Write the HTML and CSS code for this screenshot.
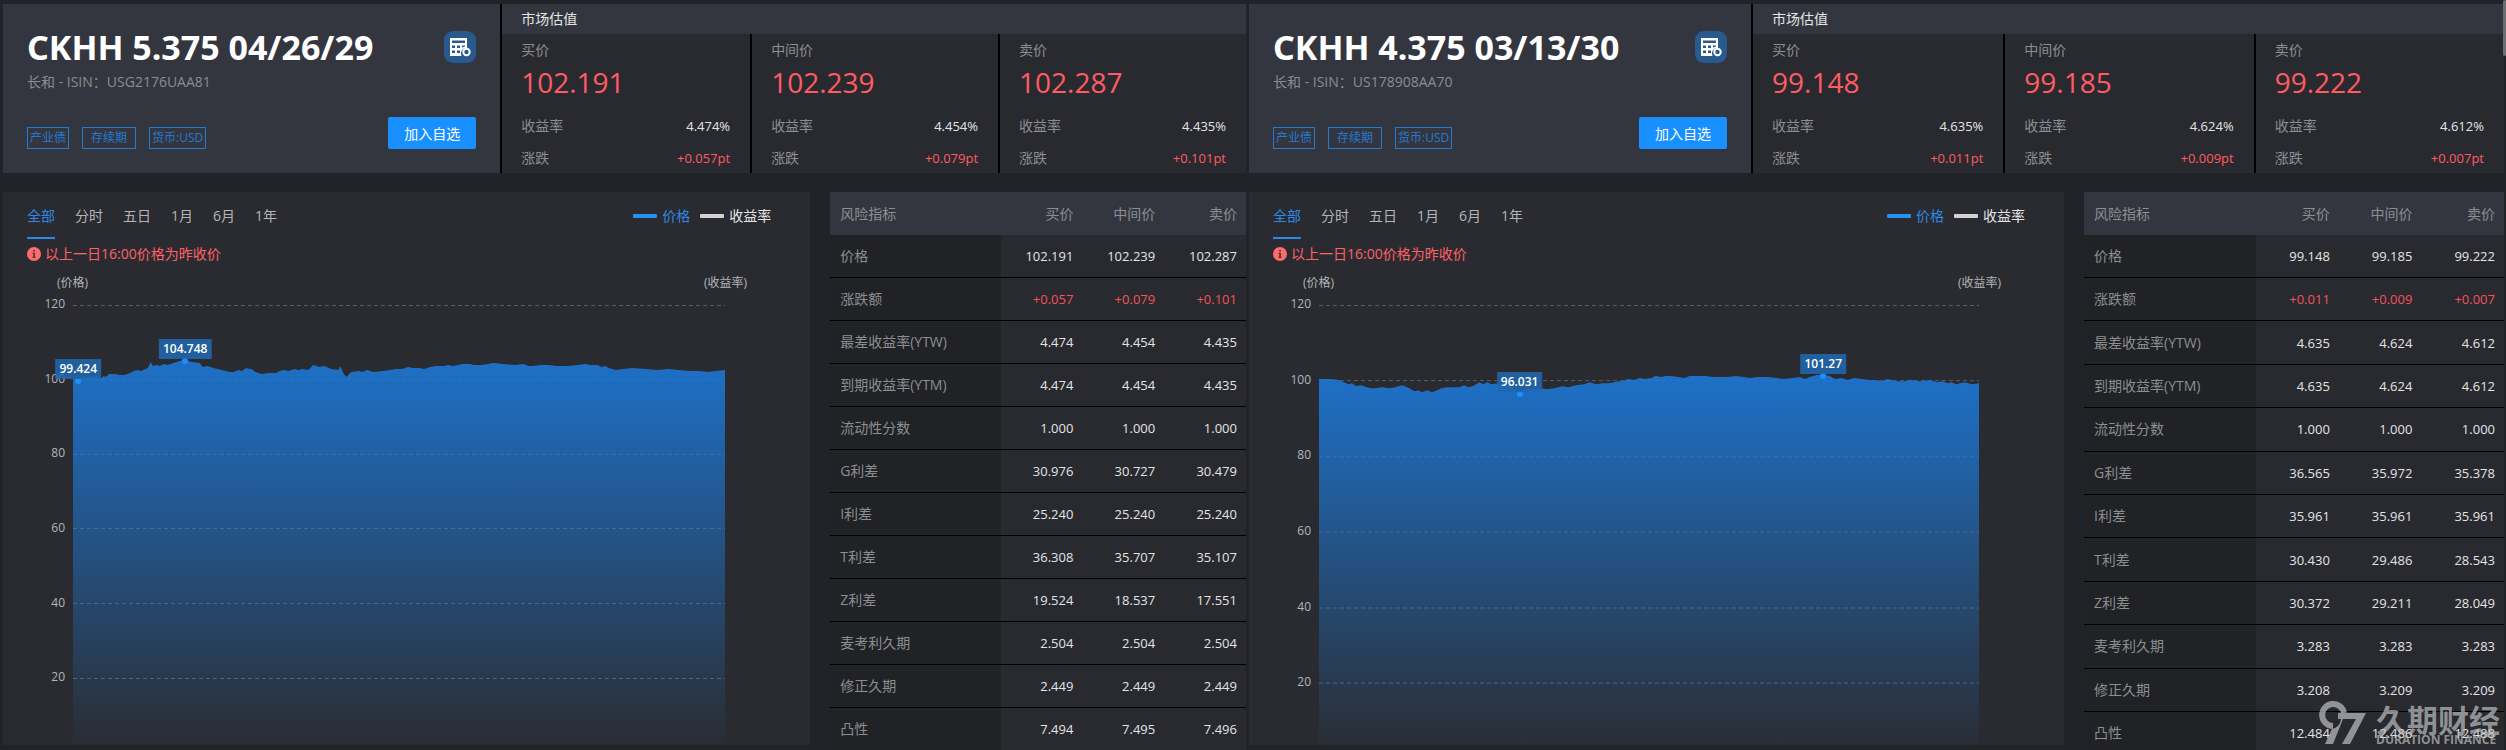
FILE: index.html
```html
<!DOCTYPE html>
<html lang="zh-CN">
<head>
    <meta charset="UTF-8">
    <meta name="viewport" content="width=device-width, initial-scale=1.0">
    <title>CKHH 债券对比</title>
    <link rel="stylesheet" href="styles.css">
</head>
<body>
    <svg class="defs" width="0" height="0" aria-hidden="true">
        <defs>
            <linearGradient id="areaFill" x1="0" y1="0" x2="0" y2="1">
                <stop offset="0" stop-color="#1c78d8" stop-opacity="0.9"/>
                <stop offset="1" stop-color="#1f7ee0" stop-opacity="0"/>
            </linearGradient>
            <symbol id="calc" viewBox="0 0 32 32">
                <path fill="#fff" fill-rule="evenodd" d="M6 7h17v10a5.500 5.500 0 0 0-5.500 8H6zM8 9.500v2.500h13V9.500zM8 14.500v2.500h3v-2.500zM13 14.500v2.500h3v-2.500zM18 14.500v2l3-1v-1zM8 19.500v2.500h3v-2.500zM13 19.500v2.500h3v-2.500z"/>
                <circle cx="22.500" cy="21" r="3.200" fill="none" stroke="#fff" stroke-width="2"/>
            </symbol>
            <symbol id="info" viewBox="0 0 14 14">
                <circle cx="7" cy="7" r="7" fill="#ff6b6b"/>
                <path fill="#2a2b30" d="M6.300 3h1.500v1.500H6.300zM5.500 5.800h2.300v4h.900v1H5.500v-1h.900v-3h-.900z"/>
            </symbol>
        </defs>
    </svg>

    <main class="page">
        <section class="bond">
            <header class="summary">
                <div class="intro">
                    <div class="intro-top">
                        <h1>CKHH 5.375 04/26/29</h1>
                        <button class="calc-btn" aria-label="计算器"><svg><use href="#calc"/></svg></button>
                    </div>
                    <p class="isin">长和 - ISIN：USG2176UAA81</p>
                    <div class="intro-bottom">
                        <div class="tags">
                            <span class="tag">产业债</span>
                            <span class="tag tag-wide">存续期</span>
                            <span class="tag">货币:USD</span>
                        </div>
                        <button class="add-btn">加入自选</button>
                    </div>
                </div>
                <div class="market">
                    <h2>市场估值</h2>
                    <div class="quotes">
                        <div class="quote">
                            <div class="label">买价</div>
                            <div class="price">102.191</div>
                            <div class="line"><span>收益率</span><b>4.474%</b></div>
                            <div class="line"><span>涨跌</span><b class="up">+0.057pt</b></div>
                        </div>
                        <div class="quote">
                            <div class="label">中间价</div>
                            <div class="price">102.239</div>
                            <div class="line"><span>收益率</span><b>4.454%</b></div>
                            <div class="line"><span>涨跌</span><b class="up">+0.079pt</b></div>
                        </div>
                        <div class="quote">
                            <div class="label">卖价</div>
                            <div class="price">102.287</div>
                            <div class="line"><span>收益率</span><b>4.435%</b></div>
                            <div class="line"><span>涨跌</span><b class="up">+0.101pt</b></div>
                        </div>
                    </div>
                </div>
            </header>

            <div class="detail">
                <div class="chart">
                    <div class="chart-bar">
                        <nav class="tabs">
                            <a href="#" class="active">全部</a>
                            <a href="#">分时</a>
                            <a href="#">五日</a>
                            <a href="#">1月</a>
                            <a href="#">6月</a>
                            <a href="#">1年</a>
                        </nav>
                        <div class="legend">
                            <span class="key key-price">价格</span>
                            <span class="key">收益率</span>
                        </div>
                    </div>
                    <p class="notice"><svg><use href="#info"/></svg>以上一日16:00价格为昨收价</p>
                    <div class="axis-names"><span>(价格)</span><span>(收益率)</span></div>
                    <div class="plot-row">
                        <ul class="y-axis"><li>120</li><li>100</li><li>80</li><li>60</li><li>40</li><li>20</li></ul>
                        <div class="plot">
                            <svg viewBox="0 0 654 448" preserveAspectRatio="none">
                                <path class="grid" d="M0 .5H654M0 74.500H654M0 149.500H654M0 223.500H654M0 298.500H654M0 373.500H654"/>
                                <path class="area" d="M0 75L5 76 9 72 13 73 17 71 20 72 24 71 27 74 31 71 33 72 36 69 42 69 47 70 52 70 57 68 61 66 65 65 68 66 71 65 75 63 78 57 80 61 84 60 87 61 91 59 95 60 101 58 107 56 112 55 119 57 127 58 130 62 135 61 141 63 149 65 153 66 157 67 161 67 166 65 169 66 174 63 177 64 179 64 183 67 189 69 196 68 204 68 207 66 211 65 216 66 222 64 226 65 230 64 236 65 238 63 241 60 247 62 252 61 259 64 266 65 268 61 271 68 274 72 279 67 287 66 290 67 295 65 301 67 311 66 318 65 324 64 330 64 336 62 341 63 347 63 352 64 358 62 364 61 372 61 376 60 381 61 391 59 398 59 402 60 410 60 416 59 421 58 431 59 444 60 452 59 457 61 461 61 469 60 477 60 485 61 497 61 506 60 514 59 518 60 526 60 530 62 534 61 537 63 541 64 544 65 552 64 561 63 574 64 587 65 597 64 607 65 619 66 627 66 637 67 645 66 654 65V448H0Z"/>
                            </svg>
                            <i class="dot" style="left: 0.8%; top: 17%"></i>
                            <i class="dot" style="left: 17.2%; top: 12.5%"></i>
                            <span class="mark" style="left: 0.8%; top: 17%">99.424</span>
                            <span class="mark" style="left: 17.2%; top: 12.5%">104.748</span>
                        </div>
                    </div>
                </div>

                <table class="risk">
                    <thead>
                        <tr><th>风险指标</th><th>买价</th><th>中间价</th><th>卖价</th></tr>
                    </thead>
                    <tbody>
                        <tr><th>价格</th><td>102.191</td><td>102.239</td><td>102.287</td></tr>
                        <tr class="up"><th>涨跌额</th><td>+0.057</td><td>+0.079</td><td>+0.101</td></tr>
                        <tr><th>最差收益率(YTW)</th><td>4.474</td><td>4.454</td><td>4.435</td></tr>
                        <tr><th>到期收益率(YTM)</th><td>4.474</td><td>4.454</td><td>4.435</td></tr>
                        <tr><th>流动性分数</th><td>1.000</td><td>1.000</td><td>1.000</td></tr>
                        <tr><th>G利差</th><td>30.976</td><td>30.727</td><td>30.479</td></tr>
                        <tr><th>I利差</th><td>25.240</td><td>25.240</td><td>25.240</td></tr>
                        <tr><th>T利差</th><td>36.308</td><td>35.707</td><td>35.107</td></tr>
                        <tr><th>Z利差</th><td>19.524</td><td>18.537</td><td>17.551</td></tr>
                        <tr><th>麦考利久期</th><td>2.504</td><td>2.504</td><td>2.504</td></tr>
                        <tr><th>修正久期</th><td>2.449</td><td>2.449</td><td>2.449</td></tr>
                        <tr><th>凸性</th><td>7.494</td><td>7.495</td><td>7.496</td></tr>
                    </tbody>
                </table>
            </div>
        </section>

        <section class="bond bond-tall">
            <header class="summary">
                <div class="intro">
                    <div class="intro-top">
                        <h1>CKHH 4.375 03/13/30</h1>
                        <button class="calc-btn" aria-label="计算器"><svg><use href="#calc"/></svg></button>
                    </div>
                    <p class="isin">长和 - ISIN：US178908AA70</p>
                    <div class="intro-bottom">
                        <div class="tags">
                            <span class="tag">产业债</span>
                            <span class="tag tag-wide">存续期</span>
                            <span class="tag">货币:USD</span>
                        </div>
                        <button class="add-btn">加入自选</button>
                    </div>
                </div>
                <div class="market">
                    <h2>市场估值</h2>
                    <div class="quotes">
                        <div class="quote">
                            <div class="label">买价</div>
                            <div class="price">99.148</div>
                            <div class="line"><span>收益率</span><b>4.635%</b></div>
                            <div class="line"><span>涨跌</span><b class="up">+0.011pt</b></div>
                        </div>
                        <div class="quote">
                            <div class="label">中间价</div>
                            <div class="price">99.185</div>
                            <div class="line"><span>收益率</span><b>4.624%</b></div>
                            <div class="line"><span>涨跌</span><b class="up">+0.009pt</b></div>
                        </div>
                        <div class="quote">
                            <div class="label">卖价</div>
                            <div class="price">99.222</div>
                            <div class="line"><span>收益率</span><b>4.612%</b></div>
                            <div class="line"><span>涨跌</span><b class="up">+0.007pt</b></div>
                        </div>
                    </div>
                </div>
            </header>

            <div class="detail">
                <div class="chart">
                    <div class="chart-bar">
                        <nav class="tabs">
                            <a href="#" class="active">全部</a>
                            <a href="#">分时</a>
                            <a href="#">五日</a>
                            <a href="#">1月</a>
                            <a href="#">6月</a>
                            <a href="#">1年</a>
                        </nav>
                        <div class="legend">
                            <span class="key key-price">价格</span>
                            <span class="key">收益率</span>
                        </div>
                    </div>
                    <p class="notice"><svg><use href="#info"/></svg>以上一日16:00价格为昨收价</p>
                    <div class="axis-names"><span>(价格)</span><span>(收益率)</span></div>
                    <div class="plot-row">
                        <ul class="y-axis"><li>120</li><li>100</li><li>80</li><li>60</li><li>40</li><li>20</li></ul>
                        <div class="plot">
                            <svg viewBox="0 0 659 453" preserveAspectRatio="none">
                                <path class="grid" d="M0 .5H659M0 75.500H659M0 151.500H659M0 226.500H659M0 302.500H659M0 377.500H659"/>
                                <path class="area" d="M0 74L6 74 12 74 20 75 25 77 29 79 33 78 37 81 42 80 48 82 52 83 56 83 63 82 70 83 76 82 83 80 88 82 92 84 95 86 99 85 103 87 108 85 113 87 118 85 122 83 128 82 134 82 140 82 145 80 149 82 153 81 157 79 160 77 164 79 168 77 172 79 178 78 190 80 196 84 200 89 204 84 213 84 220 83 228 84 235 83 243 81 249 82 256 80 265 79 270 77 277 79 283 78 289 78 295 77 299 76 303 76 308 74 315 75 320 73 325 74 332 73 336 71 342 72 346 71 352 71 358 72 365 73 370 71 378 71 386 71 392 72 400 72 408 72 416 71 423 72 430 73 438 72 447 72 458 73 464 74 473 73 480 72 485 74 490 72 497 70 504 70 510 71 513 73 516 74 522 73 527 75 535 73 549 75 556 75 561 76 568 74 576 76 584 76 591 75 600 76 610 75 617 77 622 76 628 78 631 77 636 79 644 77 652 79 659 78V453H0Z"/>
                            </svg>
                            <i class="dot" style="left: 30.4%; top: 19.6%"></i>
                            <i class="dot" style="left: 76.4%; top: 15.6%"></i>
                            <span class="mark" style="left: 30.4%; top: 19.6%">96.031</span>
                            <span class="mark" style="left: 76.4%; top: 15.6%">101.27</span>
                        </div>
                    </div>
                </div>

                <table class="risk">
                    <thead>
                        <tr><th>风险指标</th><th>买价</th><th>中间价</th><th>卖价</th></tr>
                    </thead>
                    <tbody>
                        <tr><th>价格</th><td>99.148</td><td>99.185</td><td>99.222</td></tr>
                        <tr class="up"><th>涨跌额</th><td>+0.011</td><td>+0.009</td><td>+0.007</td></tr>
                        <tr><th>最差收益率(YTW)</th><td>4.635</td><td>4.624</td><td>4.612</td></tr>
                        <tr><th>到期收益率(YTM)</th><td>4.635</td><td>4.624</td><td>4.612</td></tr>
                        <tr><th>流动性分数</th><td>1.000</td><td>1.000</td><td>1.000</td></tr>
                        <tr><th>G利差</th><td>36.565</td><td>35.972</td><td>35.378</td></tr>
                        <tr><th>I利差</th><td>35.961</td><td>35.961</td><td>35.961</td></tr>
                        <tr><th>T利差</th><td>30.430</td><td>29.486</td><td>28.543</td></tr>
                        <tr><th>Z利差</th><td>30.372</td><td>29.211</td><td>28.049</td></tr>
                        <tr><th>麦考利久期</th><td>3.283</td><td>3.283</td><td>3.283</td></tr>
                        <tr><th>修正久期</th><td>3.208</td><td>3.209</td><td>3.209</td></tr>
                        <tr><th>凸性</th><td>12.484</td><td>12.486</td><td>12.488</td></tr>
                    </tbody>
                </table>
            </div>
        </section>
    </main>

    <div class="scroll-thumb"></div>

    <div class="watermark">
        <svg viewBox="0 0 48 44">
            <path fill="none" stroke="currentColor" stroke-width="6" d="M25 12A11 11 0 1 0 14 25"/>
            <path fill="currentColor" d="M19 12H47L31 43H23L37 18H24L14 43H6L13 28Q21 26 22 18H19z"/>
        </svg>
        <div class="brand">
            <strong>久期财经</strong>
            <span>DURATION FINANCE</span>
        </div>
    </div>
</body>
</html>
```

FILE: styles.css
```css
* {
    box-sizing: border-box;
}
body {
    margin: 0;
    height: 100vh;
    overflow: hidden;
    position: relative;
    background-color: #202327;
    color: #e4e4e6;
    font-family: "Open Sans", "Noto Sans CJK SC", sans-serif;
    font-size: 14px;
    line-height: 20px;
}
h1, h2, p, ul {
    margin: 0;
    padding: 0;
}
button {
    font-family: inherit;
    border: none;
    padding: 0;
    cursor: pointer;
}
a {
    text-decoration: none;
}
.defs {
    position: absolute;
}
.page {
    display: grid;
    grid-template-columns: 1245fr 1257fr;
    grid-template-rows: 100%;
    gap: 1px;
    height: 100%;
    padding: 4px 0 0 3px;
}
.bond {
    display: flex;
    flex-direction: column;
    gap: 19px;
    min-width: 0;
    padding-right: 2px;
}

/* header cards */
.summary {
    display: grid;
    grid-template-columns: 2fr 3fr;
}
.intro {
    background-color: #34363f;
    padding: 20px 24px 24px;
    display: flex;
    flex-direction: column;
}
.intro-top, .intro-bottom {
    display: flex;
    justify-content: space-between;
    align-items: center;
}
h1 {
    font-family: "Noto Sans", sans-serif;
    font-size: 34px;
    line-height: 46px;
    font-weight: bold;
    color: #fff;
    white-space: nowrap;
}
.calc-btn {
    width: 32px;
    height: 32px;
    border-radius: 9px;
    background-color: #285a8e;
}
.calc-btn svg {
    display: block;
    width: 32px;
    height: 32px;
}
.isin {
    margin-top: 2px;
    color: #8b8c91;
}
.intro-bottom {
    margin-top: auto;
    align-items: flex-end;
}
.tags {
    display: flex;
    gap: 13px;
}
.tag {
    border: 1px solid #2579cf;
    color: #2579cf;
    padding: 0 2px;
    font-size: 12px;
    line-height: 20px;
}
.tag-wide {
    padding: 0 8px;
}
.add-btn {
    width: 88px;
    height: 32px;
    border-radius: 2px;
    background-color: #1890ff;
    color: #fff;
    font-size: 14px;
}
.market {
    display: flex;
    flex-direction: column;
    border-left: 2px solid #000;
    background-color: #292a2f;
}
h2 {
    padding: 5px 19px;
    background-color: #34363f;
    font-size: 14px;
    font-weight: normal;
}
.quotes {
    flex: 1;
    display: grid;
    grid-template-columns: 1fr 1fr 1fr;
}
.quote {
    padding: 6px 20px 5px 19px;
}
.quote + .quote {
    border-left: 2px solid #000;
}
.label, .line span {
    color: #8d8e92;
}
.price {
    padding: 5px 0 17px;
    font-size: 28px;
    line-height: 34px;
    color: #ff5b64;
}
.line {
    display: flex;
    justify-content: space-between;
    margin-bottom: 12px;
}
.line:last-child {
    margin-bottom: 0;
}
.line b {
    font-size: 13px;
    font-weight: normal;
}
.line .up {
    color: #ff5b64;
}

/* chart */
.detail {
    flex: 1;
    min-height: 0;
    display: grid;
    grid-template-columns: 66fr 34fr;
    grid-template-rows: 100%;
    gap: 20px;
}
.chart {
    background-color: #2a2b30;
    margin-bottom: 5px;
    overflow: hidden;
}
.chart-bar {
    display: flex;
    justify-content: space-between;
    align-items: flex-start;
    padding: 14px 39px 0 24px;
}
.tabs {
    display: flex;
    gap: 20px;
}
.tabs a {
    color: #b4b5b9;
    padding-bottom: 11px;
    border-bottom: 2px solid transparent;
}
.tabs .active {
    color: #2e89e6;
    border-color: #2e89e6;
}
.legend {
    display: flex;
    gap: 10px;
}
.key {
    display: flex;
    align-items: center;
    gap: 5px;
}
.key::before {
    content: "";
    width: 24px;
    height: 4px;
    border-radius: 1px;
    background-color: #d2d2d6;
}
.key-price {
    color: #2e89e6;
}
.key-price::before {
    background-color: #2490f0;
}
.notice {
    display: flex;
    align-items: center;
    gap: 4px;
    padding: 5px 24px 0;
    color: #ff6166;
}
.notice svg {
    width: 14px;
    height: 14px;
}
.axis-names {
    display: flex;
    justify-content: space-between;
    padding: 9px 63px 0 54px;
    font-size: 12px;
    color: #b4b5b9;
}
.plot-row {
    display: grid;
    grid-template-columns: 62px 1fr;
    gap: 8px;
    height: 448px;
    margin-top: 12px;
    padding-right: 85px;
}
.bond-tall .plot-row {
    height: 453px;
}
.y-axis {
    display: flex;
    flex-direction: column;
    margin-top: -11px;
    height: 100%;
    list-style: none;
    text-align: right;
    font-size: 12px;
    color: #b4b5b9;
}
.y-axis li {
    flex: 1;
}
.plot {
    position: relative;
}
.plot svg {
    display: block;
    width: 100%;
    height: 100%;
}
.grid {
    stroke: #5c5e64;
    stroke-dasharray: 4 3;
    fill: none;
    vector-effect: non-scaling-stroke;
}
.area {
    fill: url(#areaFill);
}
.dot {
    position: absolute;
    width: 6px;
    height: 6px;
    border-radius: 50%;
    background-color: #1890ff;
    transform: translate(-50%, -50%);
}
.mark {
    position: absolute;
    padding: 0 4px;
    background-color: rgba(32, 104, 178, 0.85);
    color: #fff;
    font-size: 12px;
    font-weight: 600;
    transform: translate(-50%, -22px);
}

/* risk table */
.risk {
    width: 100%;
    height: 100%;
    table-layout: fixed;
    border-collapse: collapse;
    background-color: #292a2f;
}
.risk th, .risk td {
    padding: 0 9px 0 10px;
    text-align: right;
    font-weight: normal;
    white-space: nowrap;
}
.risk th {
    color: #8d8e92;
}
.risk th:first-child {
    width: 41%;
    text-align: left;
}
.risk thead {
    background-color: #34363f;
}
.risk thead th {
    height: 43px;
}
.risk tbody th {
    background-color: #202226;
}
.risk td {
    font-size: 13px;
}
.risk tbody tr {
    border-bottom: 1px solid #000;
}
.risk tbody tr:last-child {
    border-bottom: none;
}
.risk .up td {
    color: #f2525d;
}
.bond-tall .risk {
    height: calc(100% + 4px);
}

.scroll-thumb {
    position: absolute;
    top: 0;
    right: 0;
    width: 3px;
    height: 56px;
    border-radius: 2px;
    background-color: #6d6e72;
}
.watermark {
    position: absolute;
    right: 6px;
    bottom: 5px;
    display: flex;
    align-items: flex-end;
    gap: 9px;
    color: rgba(190, 192, 196, 0.7);
}
.watermark svg {
    width: 48px;
    height: 44px;
}
.brand {
    display: flex;
    flex-direction: column;
}
.brand strong {
    font-size: 31px;
    line-height: 30px;
}
.brand span {
    font-size: 12px;
    line-height: 10px;
    font-weight: bold;
}
```
